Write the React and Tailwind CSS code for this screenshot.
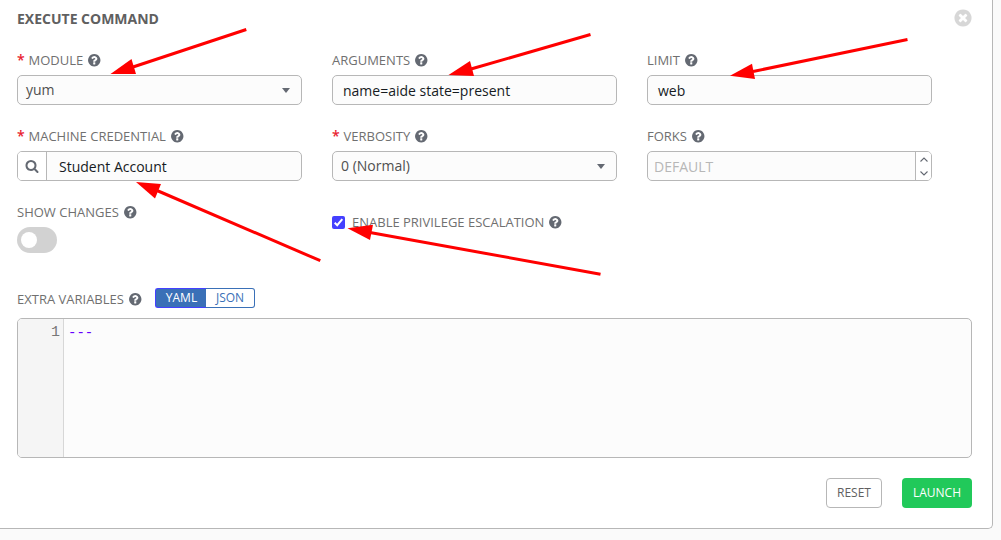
const CIRCLE =
  "m387-226q0 209-103 385.5t-279.5 279.5-385.5 103-385.5-103-279.5-279.5-103-385.5 103-385.5 279.5-279.5 385.5-103 385.5 103 279.5 279.5 103 385.5z";

function Glyph({ d, className }) {
  return (
    <svg viewBox="0 0 1792 1792" fill="currentColor" className={className} aria-hidden="true">
      <path d={d} />
    </svg>
  );
}

function Help() {
  return (
    <Glyph
      className="ml-[4px] size-[14.5px] shrink-0 text-[#646972]"
      d="M1024 1376v-192q0-14-9-23t-23-9h-192q-14 0-23 9t-9 23v192q0 14 9 23t23 9h192q14 0 23-9t9-23zm256-672q0-88-55.5-163t-138.5-116-170-41q-243 0-371 213-15 24 8 42l132 100q7 6 19 6 16 0 25-12 53-68 86-92 34-24 86-24 48 0 85.5 26t37.5 59q0 38-20 61t-68 45q-63 28-115.5 86.5t-52.5 125.5v36q0 14 9 23t23 9h192q14 0 23-9t9-23q0-19 21.5-49.5t54.5-49.5q32-18 49-28.5t46-35 44.5-48 28-60.5 12.5-81zm384 192q0 209-103 385.5t-279.5 279.5-385.5 103-385.5-103-279.5-279.5-103-385.5 103-385.5 279.5-279.5 385.5-103 385.5 103 279.5 279.5 103 385.5z"
    />
  );
}

function Label({ children, required }) {
  return (
    <div className="flex h-5 items-center text-[13px] leading-5 whitespace-nowrap text-[#707070]">
      {required && <span className="mr-[3.5px] w-2 text-[14px] font-semibold text-[#e8222f]">*</span>}
      <span>{children}</span>
      <Help />
    </div>
  );
}

function Field({ label, required, children }) {
  return (
    <div className="flex h-[76px] flex-col gap-[5px]">
      <Label required={required}>{label}</Label>
      {children}
    </div>
  );
}

function Select({ value }) {
  return (
    <div className="flex h-[30px] items-center justify-between rounded-[5px] border border-[#b7b7b7] bg-[#fcfcfc] pr-[11px] pl-2 text-[14px] text-[#505050]">
      <span className="-mt-px">{value}</span>
      <svg viewBox="0 0 8 5" className="h-[5px] w-2" fill="#646972">
        <path d="M0 0h8L4 5z" />
      </svg>
    </div>
  );
}

function TextBox({ value }) {
  return (
    <div className="flex h-[30px] items-center rounded-[5px] border border-[#b7b7b7] bg-[#fcfcfc] px-2.5 pt-px text-[14px] text-[#161b1f]">
      {value}
    </div>
  );
}

function Arrows() {
  return (
    <svg className="pointer-events-none absolute top-0 left-0 h-[540px] w-[1001px]" viewBox="0 0 1001 540">
      <g stroke="#ff0000" strokeWidth="3">
        <path d="M246.300 29.500 L133 67" />
        <path d="M590.500 34.500 L471 69" />
        <path d="M907.500 39.500 L753 71.500" />
        <path d="M320.300 260.700 L157 190.500" />
        <path d="M600.500 274.200 L370 232.500" />
      </g>
      <g fill="#ff0000">
        <path d="M110.500 73.900 L131.500 59 L136 74z" />
        <path d="M448.500 75 L470 61 L474 76z" />
        <path d="M730 75.800 L752 63.700 L755 79z" />
        <path d="M136 182 L161 184 L155 198.500z" />
        <path d="M347.500 228.300 L373 224.700 L370 240z" />
      </g>
    </svg>
  );
}

export default function App() {
  return (
    <div className="relative h-[540px] w-[1001px] overflow-hidden bg-[#fafafa] font-['Open_Sans','Noto_Sans',sans-serif]">
      <div className="h-[529px] w-[993px] rounded-br-[5px] border-r border-b border-[#b7b7b7] bg-white pt-2 pr-5 pl-[17px]">
        <div className="flex h-[42px] items-start justify-between">
          <h1 className="text-[14px] leading-[21px] font-bold text-[#606060]">EXECUTE COMMAND</h1>
          <Glyph
            className="-mr-[1px] size-5 text-[#d7d7d7]"
            d={"M1277 1122q0-26-19-45l-181-181 181-181q19-19 19-45 0-27-19-46l-90-90q-19-19-46-19-26 0-45 19l-181 181-181-181q-19-19-45-19-27 0-46 19l-90 90q-19 19-19 46 0 26 19 45l181 181-181 181q-19 19-19 45 0 27 19 46l90 90q19 19 46 19 26 0 45-19l181-181 181 181q19 19 45 19 27 0 46-19l90-90q19-19 19-46z" + CIRCLE}
          />
        </div>

        <div className="grid grid-cols-[285px_285px_285px] gap-x-[30px]">
          <Field label="MODULE" required>
            <Select value="yum" />
          </Field>
          <Field label="ARGUMENTS">
            <TextBox value="name=aide state=present" />
          </Field>
          <Field label="LIMIT">
            <TextBox value="web" />
          </Field>
          <Field label="MACHINE CREDENTIAL" required>
            <div className="flex h-[30px] overflow-hidden rounded-[5px] border border-[#b7b7b7] bg-[#fcfcfc]">
              <div className="flex w-[29px] items-center justify-center border-r border-[#b7b7b7] bg-white text-[#646972]">
                <Glyph
                  className="size-[14px]"
                  d="M1216 832q0-185-131.5-316.5t-316.5-131.500-316.500 131.500-131.500 316.500 131.500 316.500 316.500 131.500 316.500-131.500 131.500-316.500zm512 832q0 52-38 90t-90 38q-54 0-90-38l-343-342q-179 124-399 124-143 0-273.500-55.500t-225-150-150-225-55.500-273.500 55.500-273.500 150-225 225-150 273.500-55.500 273.500 55.500 225 150 150 225 55.500 273.500q0 220-124 399l343 343q37 37 37 90z"
                />
              </div>
              <div className="flex items-center pt-px pl-3 text-[14px] text-[#161b1f]">Student Account</div>
            </div>
          </Field>
          <Field label="VERBOSITY" required>
            <Select value="0 (Normal)" />
          </Field>
          <Field label="FORKS">
            <div className="flex h-[30px] justify-between overflow-hidden rounded-[5px] border border-[#b7b7b7] bg-[#fcfcfc]">
              <div className="flex items-center pt-px pl-1.5 text-[14px] text-[#b7b7b7]">DEFAULT</div>
              <div className="flex w-4 flex-col items-center justify-between border-l border-[#b7b7b7] bg-white pt-[5px] pb-1">
                <svg viewBox="0 0 8 5" className="h-[5px] w-2" fill="none" stroke="#646972" strokeWidth="1.1">
                  <path d="M.5 4.500 4 1l3.500 3.500" />
                </svg>
                <svg viewBox="0 0 8 5" className="h-[5px] w-2" fill="none" stroke="#646972" strokeWidth="1.1">
                  <path d="M.5.500 4 4 7.500.500" />
                </svg>
              </div>
            </div>
          </Field>
          <Field label="SHOW CHANGES">
            <div className="flex h-[26px] w-10 items-center rounded-full bg-[#d2d2d2] pl-1">
              <div className="size-4 rounded-full bg-white" />
            </div>
          </Field>
          <div className="flex h-[76px] items-start pt-[10px]">
            <span className="mt-[4px] mr-[7px] flex size-[13px] items-center justify-center rounded-[2px] bg-[#4440ff]">
              <svg viewBox="0 0 13 13" className="size-[13px]" fill="none" stroke="#fff" strokeWidth="2">
                <path d="M2.700 6.800 5.200 9.200 10.300 3.200" />
              </svg>
            </span>
            <Label>ENABLE PRIVILEGE ESCALATION</Label>
          </div>
        </div>

        <div className="mt-[10px] flex h-[30px] items-start">
          <div className="w-[138px] pt-[1px]">
            <Label>EXTRA VARIABLES</Label>
          </div>
          <div className="flex h-5 w-[100px] text-[12px] leading-[17px]">
            <span className="w-[51px] rounded-l-[3px] border border-r-0 border-[#4440ff] bg-[#3a70b7] pl-px text-center text-white">YAML</span>
            <span className="w-[49px] rounded-r-[3px] border border-l-0 border-[#3a70b7] bg-white text-center text-[#3a70b7]">JSON</span>
          </div>
        </div>

        <div className="flex h-[140px] w-[955px] overflow-hidden rounded-[5px] border border-[#b7b7b7] bg-[#fcfcfc] font-['Liberation_Mono',monospace] text-[14px] leading-5">
          <div className="w-[46px] border-r border-[#d7d7d7] bg-[#f5f5f5] pt-1 pr-[3px] text-right text-[15px] text-[#777777]">1</div>
          <div className="pt-1 pl-1 text-[#6600ff]">---</div>
        </div>

        <div className="mt-5 flex justify-end gap-5 text-[12px]">
          <div className="flex h-[30px] w-14 items-center justify-center rounded-[4px] border border-[#b7b7b7] bg-white text-[#606060]">RESET</div>
          <div className="flex h-[30px] w-[70px] items-center justify-center rounded-[4px] bg-[#21c95a] text-white">LAUNCH</div>
        </div>
      </div>
      <Arrows />
    </div>
  );
}
